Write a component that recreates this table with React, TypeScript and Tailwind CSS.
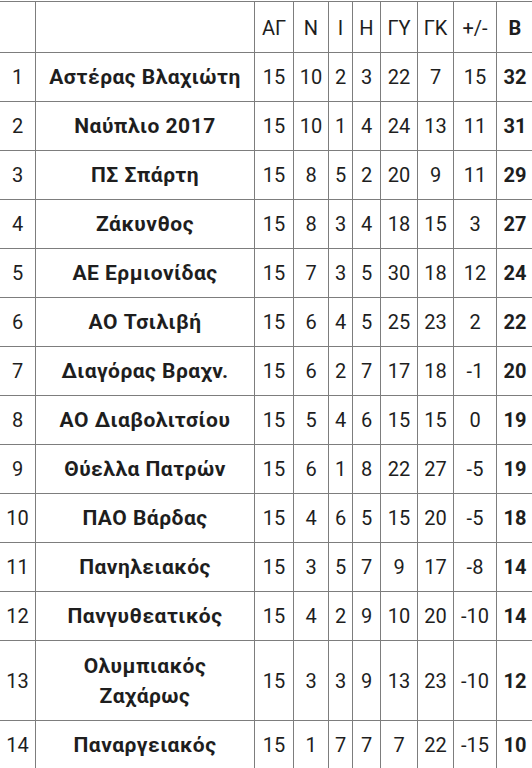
import React from 'react';

type Row = [number, string, number, number, number, number, number, number, number, number];

const rows: Row[] = [
  [1, 'Αστέρας Βλαχιώτη', 15, 10, 2, 3, 22, 7, 15, 32],
  [2, 'Ναύπλιο 2017', 15, 10, 1, 4, 24, 13, 11, 31],
  [3, 'ΠΣ Σπάρτη', 15, 8, 5, 2, 20, 9, 11, 29],
  [4, 'Ζάκυνθος', 15, 8, 3, 4, 18, 15, 3, 27],
  [5, 'ΑΕ Ερμιονίδας', 15, 7, 3, 5, 30, 18, 12, 24],
  [6, 'ΑΟ Τσιλιβή', 15, 6, 4, 5, 25, 23, 2, 22],
  [7, 'Διαγόρας Βραχν.', 15, 6, 2, 7, 17, 18, -1, 20],
  [8, 'ΑΟ Διαβολιτσίου', 15, 5, 4, 6, 15, 15, 0, 19],
  [9, 'Θύελλα Πατρών', 15, 6, 1, 8, 22, 27, -5, 19],
  [10, 'ΠΑΟ Βάρδας', 15, 4, 6, 5, 15, 20, -5, 18],
  [11, 'Πανηλειακός', 15, 3, 5, 7, 9, 17, -8, 14],
  [12, 'Πανγυθεατικός', 15, 4, 2, 9, 10, 20, -10, 14],
  [13, 'Ολυμπιακός|Ζαχάρως', 15, 3, 3, 9, 13, 23, -10, 12],
  [14, 'Παναργειακός', 15, 1, 7, 7, 7, 22, -15, 10],
];

const headers = ['', '', 'ΑΓ', 'Ν', 'Ι', 'Η', 'ΓΥ', 'ΓΚ', '+/-', 'Β'];
const widths = ['w-[36px]', 'w-[219px]', 'w-[39px]', 'w-[35px]', 'w-[24px]', 'w-[28px]', 'w-[37px]', 'w-[36px]', 'w-[43px]', 'w-[37px]'];

const cell = 'border border-[#7d7d7d] text-center align-middle p-0';

export default function App() {
  return (
    <div className="w-[532px] h-[768px] overflow-hidden bg-white text-[#1e1e1e] font-['Roboto',sans-serif] text-[20px] leading-[30px]">
      <table className="table-fixed border-collapse w-[534px] ml-[-1px] mt-[1px]">
        <colgroup>
          {widths.map((w, i) => (
            <col key={i} className={w} />
          ))}
        </colgroup>
        <thead>
          <tr className="h-[51px]">
            {headers.map((h, i) => (
              <th key={i} className={`${cell} ${i === 9 ? 'font-bold' : 'font-normal'} pt-[2px]`}>
                {h}
              </th>
            ))}
          </tr>
        </thead>
        <tbody>
          {rows.map((r) => {
            const [pos, team, ...stats] = r;
            const lines = team.split('|');
            return (
              <tr key={pos} className={lines.length > 1 ? 'h-[80px]' : 'h-[49px]'}>
                <td className={cell}>{pos}</td>
                <td className={`${cell} font-bold text-[21px] tracking-[0.5px]`}>
                  {lines.map((l, i) => (
                    <React.Fragment key={i}>
                      {i > 0 && <br />}
                      {l}
                    </React.Fragment>
                  ))}
                </td>
                {stats.map((s, i) => (
                  <td key={i} className={`${cell} ${i === 7 ? 'font-bold' : ''}`}>
                    {s}
                  </td>
                ))}
              </tr>
            );
          })}
        </tbody>
      </table>
    </div>
  );
}
